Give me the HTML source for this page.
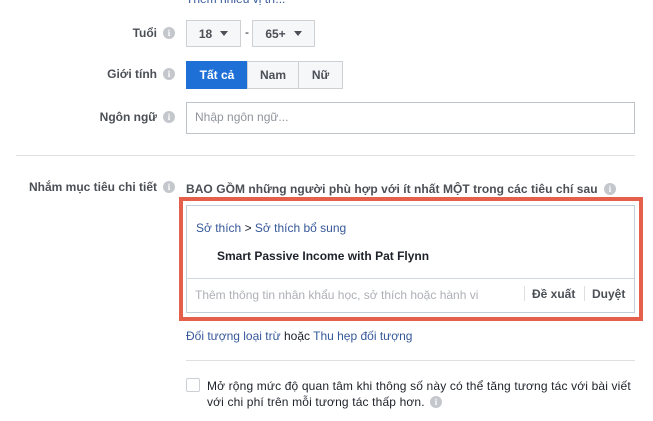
<!DOCTYPE html>
<html><head><meta charset="utf-8"><style>
body{margin:0;width:653px;height:421px;background:#fff;font-family:"Liberation Sans",Arial,sans-serif;font-size:12px;color:#1d2129;position:relative;overflow:hidden}
.a{position:absolute;white-space:nowrap}
.lbl{font-weight:bold;color:#4b4f56;text-align:right;right:496px}
.i{position:absolute;width:12px;height:12px;border-radius:50%;background:#c4c7cc;color:#fff;font-size:9px;font-weight:bold;text-align:center;line-height:12px;font-family:"Liberation Serif",serif}
.btn{position:absolute;background:#f6f7f9;border:1px solid #ced0d4;box-sizing:border-box;font-weight:bold;color:#4b4f56;display:flex;align-items:center;justify-content:center}
.car{display:inline-block;border-left:4px solid transparent;border-right:4px solid transparent;border-top:5px solid #4b4f56;margin-left:8px}
.lk{color:#365899}
</style></head><body>
<div class="a lk" style="left:186px;top:-8px;font-size:12px">Thêm nhiều vị trí...</div>

<div class="a lbl" style="top:26px">Tuổi</div><div class="i" style="left:163px;top:27px">i</div>
<div class="btn" style="left:186px;top:20px;width:55px;height:27px">18<span class="car"></span></div>
<div class="a" style="left:245px;top:25px">-</div>
<div class="btn" style="left:252px;top:20px;width:63px;height:27px">65+<span class="car"></span></div>

<div class="a lbl" style="top:67px">Giới tính</div><div class="i" style="left:163px;top:68px">i</div>
<div class="btn" style="left:186px;top:61px;width:62px;height:28px;background:#1f70d6;border-color:#1f70d6;color:#fff">Tất cả</div>
<div class="btn" style="left:247px;top:61px;width:52px;height:28px">Nam</div>
<div class="btn" style="left:298px;top:61px;width:45px;height:28px">Nữ</div>

<div class="a lbl" style="top:110px">Ngôn ngữ</div><div class="i" style="left:163px;top:111px">i</div>
<div class="a" style="left:186px;top:102px;width:449px;height:32px;border:1px solid #bec2c9;box-sizing:border-box"></div>
<div class="a" style="left:195px;top:110px;color:#90949c">Nhập ngôn ngữ...</div>

<div class="a" style="left:16px;top:155px;width:619px;height:1px;background:#dddfe2"></div>

<div class="a lbl" style="top:180px">Nhắm mục tiêu chi tiết</div><div class="i" style="left:163px;top:181px">i</div>
<div class="a" style="left:186px;top:182px;font-weight:bold;color:#4b4f56;letter-spacing:0.05px">BAO GỒM những người phù hợp với ít nhất MỘT trong các tiêu chí sau</div>
<div class="i" style="left:604px;top:183px">i</div>

<div class="a" style="left:179px;top:197px;width:464px;height:124px;border:4px solid #e4604a;box-sizing:border-box"></div>
<div class="a" style="left:186px;top:205px;width:449px;height:108px;border:1px solid #bfd0d8;box-sizing:border-box"></div>
<div class="a" style="left:186px;top:278px;width:449px;height:1px;background:#cfd8dc"></div>
<div class="a lk" style="left:196px;top:221px"><span class="lk">Sở thích</span> <span style="color:#1d2129">&gt;</span> Sở thích bổ sung</div>
<div class="a" style="left:217px;top:249px;font-weight:bold">Smart Passive Income with Pat Flynn</div>
<div class="a" style="left:195px;top:288px;color:#adb0b5">Thêm thông tin nhân khẩu học, sở thích hoặc hành vi</div>
<div class="a" style="left:524px;top:286px;width:1px;height:15px;background:#dddfe2"></div>
<div class="a" style="left:532px;top:287px;font-weight:bold;color:#4b4f56">Đề xuất</div>
<div class="a" style="left:584px;top:286px;width:1px;height:15px;background:#dddfe2"></div>
<div class="a" style="left:592px;top:287px;font-weight:bold;color:#4b4f56">Duyệt</div>

<div class="a" style="left:186px;top:329px"><span class="lk">Đối tượng loại trừ</span> hoặc <span class="lk">Thu hẹp đối tượng</span></div>
<div class="a" style="left:186px;top:360px;width:449px;height:1px;background:#dddfe2"></div>
<div class="a" style="left:186px;top:378px;width:14px;height:14px;border:1px solid #ccd0d5;box-sizing:border-box;border-radius:2px"></div>
<div class="a" style="left:207px;top:378px;line-height:16px;color:#1d2129;letter-spacing:0.15px">Mở rộng mức độ quan tâm khi thông số này có thể tăng tương tác với bài viết<br>với chi phí trên mỗi tương tác thấp hơn.</div>
<div class="i" style="left:430px;top:396px">i</div>
</body></html>
